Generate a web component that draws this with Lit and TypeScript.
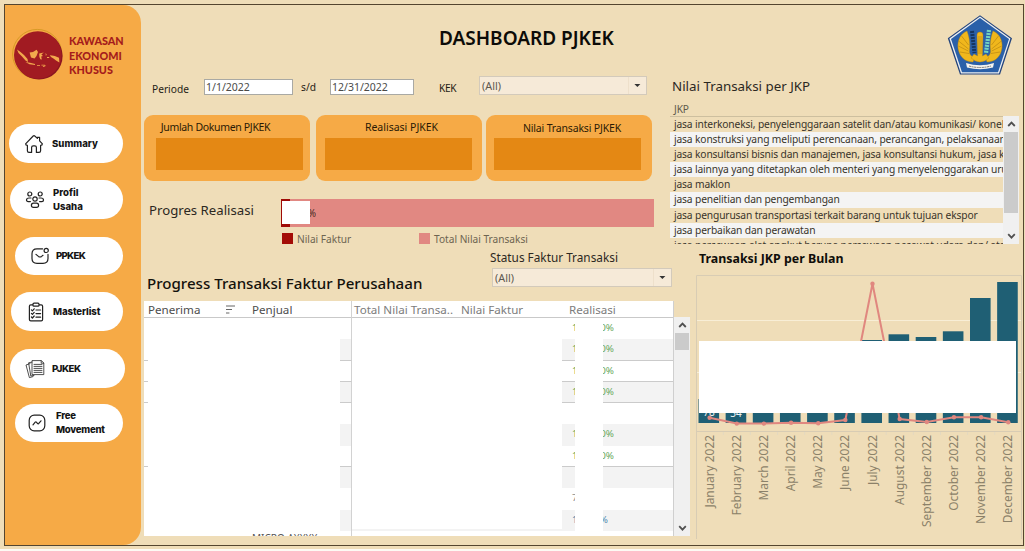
import { LitElement, html, svg, css, nothing } from "lit";
import { customElement, property } from "lit/decorators.js";

const ICONS: Record<string, unknown> = {
  home: svg`<path d="M1.6 9.8 L9.2 2 Q10 1.2 10.8 2 L13.4 4.4 V3.4 H15.6 V6.8 L18.4 9.8 Q18.4 11.4 16.6 11.4 V16.8 Q16.6 18.4 15 18.4 H12.4 V13.4 Q12.4 11.8 10.8 11.8 H9.2 Q7.6 11.8 7.6 13.4 V18.4 H5 Q3.4 18.4 3.4 16.8 V11.4 Q1.6 11.4 1.6 9.8 Z"/>`,
  people: svg`<circle cx="4.8" cy="4" r="2"/><circle cx="15.2" cy="4" r="2"/><circle cx="10" cy="9" r="2.2"/>
    <path d="M5.4 11.6H3.2a1.7 1.7 0 0 1-1.7-1.7c0-1.3 1.1-1.9 2.6-1.9h1.9M14.6 11.6h2.2a1.7 1.7 0 0 0 1.7-1.7c0-1.3-1.1-1.9-2.6-1.9h-1.9"/><rect x="6.4" y="13.2" width="7.2" height="4.2" rx="2.1"/>`,
  mail: svg`<path d="M12.6 2.8H7Q2 2.8 2 7.8V12.6Q2 17.4 7 17.4H13Q18 17.4 18 12.6V8.4"/><path d="M6 8.4 L8.4 10.4 Q10 11.6 11.6 10.4 L13 9.3"/><circle cx="16.2" cy="4.4" r="2.1"/>`,
  clipboard: svg`<rect x="3.4" y="2.8" width="13.2" height="16" rx="1.4"/><rect x="7" y="1.2" width="6" height="3" rx="1" fill="#fff"/>
    <path d="M5.4 7.8l1 1 1.8-2M10 8h4.6M5.4 11.4l1 1 1.8-2M10 11.6h4.6M5.4 15l1 1 1.8-2M10 15.2h4.6"/>`,
  papers: svg`<g stroke-width="0.8"><path d="M5 4.6 L1 6 L4.4 18.6 L8 17.6"/><path d="M7.4 3 L3.6 3.8 L5.8 17 L9 16.4"/><path d="M7.4 1.6H16.4L18.8 4V15.6H7.4Z" fill="#fff"/><path d="M9 5.4h8M9 7.4h8M9 9.4h8M9 11.4h8M9 13.4h8M16.2 1.8V4.2H18.6"/></g>`,
  trend: svg`<rect x="2.2" y="2.2" width="15.6" height="15.6" rx="5"/><path d="M6 11.8 L8.2 9.2 Q8.8 8.6 9.4 9.2 L10.6 10.6 Q11.2 11.2 11.8 10.4 L14 7.8"/>`,
};

@customElement("nav-pill")
class NavPill extends LitElement {
  @property() icon = "";
  @property() label = "";

  static styles = css`
    :host {
      display: flex;
      align-items: center;
      box-sizing: border-box;
      border-radius: 20px;
      background: #fff;
      color: #151515;
      font: 800 9.6px/13.6px Inter, sans-serif;
      white-space: pre-line;
    }
    .glyph {
      flex: none;
      width: 20px;
      height: 20px;
      margin-right: var(--gap, 8px);
      fill: none;
      stroke: #222;
      stroke-width: 1.2;
      stroke-linejoin: round;
      stroke-linecap: round;
    }
    .label { letter-spacing: var(--track, 0); }
  `;

  render() {
    return html`<svg class="glyph" viewBox="0 0 20 20">${ICONS[this.icon]}</svg><span class="label">${this.label}</span>`;
  }
}

@customElement("select-box")
class SelectBox extends LitElement {
  @property() value = "";

  static styles = css`
    :host {
      display: flex;
      box-sizing: border-box;
      height: 19px;
      border: 1px solid #d3cabb;
      background: #f6ead8;
      color: #5d5850;
      font: 10.8px/18px "Noto Sans", sans-serif;
    }
    .value { flex: 1; padding-left: 2px; }
    .arrow { width: 17px; height: 17px; border-left: 1px solid #eee0cb; }
  `;

  render() {
    return html`<span class="value">${this.value}</span>
      <svg class="arrow" viewBox="0 0 17 17"><path d="M5.4 7h6L8.4 10z" fill="#333" /></svg>`;
  }
}

@customElement("scroll-bar")
class ScrollBar extends LitElement {
  @property({ type: Number }) thumb = 20;

  static styles = css`
    :host {
      display: flex;
      flex-direction: column;
      align-items: center;
      background: #f0f0f0;
    }
    .arrow { width: 15px; height: 16px; fill: none; stroke: #505050; stroke-width: 1.8; }
    .thumb { width: 14px; background: #cbcbcb; }
    .down { margin-top: auto; }
  `;

  render() {
    return html`<svg class="arrow" viewBox="0 0 15 16"><path d="M4.2 10 7.5 6.6l3.3 3.4" /></svg>
      <div class="thumb" style="height:${this.thumb}px"></div>
      <svg class="arrow down" viewBox="0 0 15 16"><path d="M4.2 6.2 7.5 9.6l3.3-3.4" /></svg>`;
  }
}

const MONTHS = ["January", "February", "March", "April", "May", "June", "July", "August", "September", "October", "November", "December"];
const BAR_TOPS = [124, 138, 138, 138, 138, 138, 65, 59.3, 62, 56.3, 23, 7];
const LINE_Y = [142.7, 148.6, 148.6, 147.7, 148.2, 145, 8.7, 144, 147, 142.3, 142.3, 147.3];

@customElement("month-chart")
class MonthChart extends LitElement {
  static styles = css`
    :host { display: block; }
    .chart { display: block; }
    .month { font: 11.9px "Noto Sans", sans-serif; fill: #8b8169; text-anchor: end; }
    .count { font: 10px "Noto Sans", sans-serif; fill: #eef4f5; text-anchor: middle; }
  `;

  render() {
    const x = (i: number) => 13.6 + i * 27.15;
    const points = LINE_Y.map((y, i) => `${x(i)},${y}`).join(" ");
    return html`<svg class="chart" width="327" height="264" viewBox="0 0 327 264">
      <path d="M0 45.5H325M0 97.5H325" stroke="#f8eed6" />
      <path d="M0.5 264V0.5H325.5V264" fill="none" stroke="#d8ccb4" />
      <path d="M1 156.5H325" stroke="#d8ccb4" />
      ${MONTHS.map((_, i) => (i ? svg`<path d="M${x(i) - 13.5} 157v3" stroke="#e4d9c0" />` : nothing))}
      ${BAR_TOPS.map((t, i) => svg`<rect x=${x(i) - 11.1} y=${t} width="20.6" height=${148 - t} fill="#1f5f74" />`)}
      <text class="count" x="13" y="141">78</text>
      <text class="count" x="40" y="142">34</text>
      <polyline points=${points} fill="none" stroke="#e0877f" stroke-width="2" />
      ${LINE_Y.map((y, i) => svg`<circle cx=${x(i)} cy=${y} r="2.2" fill="#e0877f" />`)}
      <rect x="3" y="66" width="317" height="72" fill="#fff" />
      ${MONTHS.map((m, i) => svg`<text class="month" transform="translate(${x(i) + 4} 160) rotate(-90)">${m} 2022</text>`)}
    </svg>`;
  }
}

const SERVICES = [
  "jasa interkoneksi, penyelenggaraan satelit dan/atau komunikasi/ konektivitas",
  "jasa konstruksi yang meliputi perencanaan, perancangan, pelaksanaan",
  "jasa konsultansi bisnis dan manajemen, jasa konsultansi hukum, jasa konsultansi",
  "jasa lainnya yang ditetapkan oleh menteri yang menyelenggarakan urusan",
  "jasa maklon",
  "jasa penelitian dan pengembangan",
  "jasa pengurusan transportasi terkait barang untuk tujuan ekspor",
  "jasa perbaikan dan perawatan",
  "jasa persewaan alat angkut berupa persewaan pesawat udara dan/ atau",
];

interface Row { lead: string; tail: string; line?: boolean; tone?: string }
const ROWS: Row[] = [
  { lead: "1", tail: "0%" },
  { lead: "1", tail: "0%", line: true },
  { lead: "1", tail: "0%", line: true },
  { lead: "1", tail: "0%", line: true },
  { lead: "", tail: "" },
  { lead: "1", tail: "0%" },
  { lead: "1", tail: "0%", line: true },
  { lead: "", tail: "" },
  { lead: "7", tail: "", tone: "grey" },
  { lead: "1", tail: "%", tone: "blue" },
];

@customElement("app-root")
class AppRoot extends LitElement {
  static styles = css`
    :host {
      display: block;
      width: 1025px;
      height: 551px;
      overflow: hidden;
      background: #fdfaf4;
      font-family: "Noto Sans", sans-serif;
      color: #2c281f;
      white-space: nowrap;
    }
    .page { box-sizing: border-box; height: 549px; padding: 4px 1px 3px 4px; background: #efddb8; }
    .frame {
      box-sizing: border-box;
      display: grid;
      grid-template-columns: 136px 552px 1fr;
      height: 542px;
      border: 1px solid #54452f;
    }

    .side { display: flex; flex-direction: column; height: 540px; border-radius: 0 18px 18px 0; background: #f6aa46; }
    .brand { display: flex; height: 119px; }
    .seal { width: 54px; height: 54px; margin: 23px 4px 0 6px; }
    .brand-name { padding-top: 29px; font: 900 10.8px/14.7px Lato, sans-serif; color: #a51c1c; white-space: pre-line; }
    .pill { height: 39px; width: 114px; margin: 0 0 17px 4px; padding-left: 15px; }
    .pill.profil { margin-left: 5px; width: 113px; margin-bottom: 18px; --gap: 8px; }
    .pill.ppkek { margin-left: 10px; width: 108px; height: 38px; --gap: 6px; --track: -0.7px; }
    .pill.master { margin-left: 6px; width: 112px; margin-bottom: 18px; --gap: 7px; --track: -0.1px; }
    .pill.pjkek { margin-left: 5px; width: 115px; margin-bottom: 16px; --gap: 7px; --track: -0.5px; }
    .pill.free { margin-left: 10px; width: 108px; height: 38px; padding-left: 12px; --gap: 9px; --track: -0.25px; }

    .main { padding-left: 3px; }
    .title { height: 71px; margin: 0; padding-left: 295px; font-size: 19px; line-height: 66px; font-weight: 600; color: #0c0b08; }
    .filters { display: flex; height: 39px; font-size: 10.2px; line-height: 19px; color: #1f1c15; }
    .periode { width: 60px; padding: 4px 0 0 8px; box-sizing: border-box; }
    .date { box-sizing: border-box; width: 89px; height: 16px; margin-top: 3px; padding-left: 1px; border: 1px solid #a9a9a4; background: #fff; font-size: 10.5px; line-height: 14px; color: #4a4a48; }
    .sd { width: 37px; padding: 2px 0 0 8px; box-sizing: border-box; }
    .date.end { width: 84px; }
    .kek { width: 65px; padding: 3px 0 0 25px; box-sizing: border-box; letter-spacing: -0.3px; }
    .kek-select { width: 168px; }

    .cards { display: flex; height: 66px; }
    .card { box-sizing: border-box; width: 166px; margin-right: 6px; padding: 3px 7px 0 12px; border-radius: 9px; background: #f6aa46; font-size: 10.5px; line-height: 18px; text-align: center; color: #2b1a05; }
    .card.second { margin-right: 4px; padding: 3px 10px 0 9px; }
    .card.third { padding: 4px 11px 0 8px; }
    .fill { height: 32px; margin-top: 2px; background: #e48814; }
    .card.third .fill { margin-top: 1px; }
    .first .card-name { padding-right: 28px; letter-spacing: -0.33px; }
    .second .card-name { padding-left: 6px; }
    .third .card-name { padding-left: 9px; letter-spacing: -0.17px; }

    .progress { display: flex; height: 28px; margin-top: 18px; }
    .progress-name { width: 137px; box-sizing: border-box; padding-left: 5px; font-size: 13.2px; line-height: 23px; }
    .track { display: flex; width: 373px; background: linear-gradient(90deg, #9f0a06 0 9px, #e18882 9px); }
    .masked { width: 28px; height: 23px; margin: 2px 0 0 1px; background: #fff; }
    .percent { width: 6px; overflow: hidden; direction: rtl; font-size: 10px; line-height: 28px; color: #4b2a22; }
    .legend { display: flex; height: 19px; padding: 4px 0 0 138px; font-size: 10.15px; line-height: 16px; color: #6d6450; }
    .key { width: 11px; height: 11px; margin: 2px 4px 0 0; background: #a30c06; }
    .key.total { background: #e18882; }
    .legend-name { width: 122px; }

    .table-head { display: flex; justify-content: space-between; height: 51px; }
    .table-title { margin: 0; padding: 20px 0 0 3px; font-size: 15.1px; line-height: 26px; font-weight: 500; color: #14120c; }
    .status { width: 203px; font-size: 11.8px; }
    .status-name { height: 18px; line-height: 14px; }
    .status-select { width: 180px; margin-left: 2px; }

    .table { display: flex; width: 547px; height: 235px; }
    .grid { width: 529px; height: 235px; overflow: hidden; background: #fff; border-right: 1px solid #cfcfcf; }
    .columns { display: grid; grid-template-columns: 108px 99px 109px 108px 1fr; height: 16px; border-bottom: 1px solid #c9c9c9; font-size: 11.6px; line-height: 18px; color: #4d4d4d; }
    .column.sorted { display: flex; justify-content: space-between; padding: 0 17px 0 4px; }
    .column.soft { padding-left: 1px; color: #7c7c7c; }
    .column.soft.split { border-left: 1px solid #d2d2d2; padding-left: 2px; letter-spacing: 0; }
    .sort { width: 9px; height: 9px; margin-top: 4px; stroke: #666; stroke-width: 1.2; }
    .row { display: grid; grid-template-columns: 4px 192px 12px 210px 13px 28px 1fr; box-sizing: border-box; height: 21.3px; font-size: 9.8px; line-height: 20px; color: #69a95d; }
    .cell { box-sizing: border-box; height: 21.3px; overflow: hidden; background: #fff; }
    .row.even .tinted { background: #f3f3f3; }
    .row.line .ruled { border-bottom: 1px solid #cbcbcb; }
    .row .divide { border-right: 1px solid #d2d2d2; }
    .row.blue .wide { border-bottom: 2px solid #f3f3f3; }
    .cell.lead { padding-left: 10px; }
    .cell.tail { display: flex; }
    .clip { display: flex; justify-content: flex-end; width: 11px; overflow: hidden; }
    .row.blue .clip { width: 5px; }
    .row.grey { color: #8b8b8b; }
    .row.blue { color: #4f86ad; }
    .next { display: grid; grid-template-columns: 108px 100px 1fr; height: 5px; font-size: 10px; line-height: 14px; color: #555; }
    .next-name { height: 5px; overflow: hidden; border-right: 1px solid #d2d2d2; }
    .table-scroll { width: 16px; margin: 16px 0 0 0; }

    .right { position: relative; }
    .emblem { position: absolute; left: 253px; top: 9px; width: 68px; height: 62px; }
    .jkp-title { margin: 0 0 0 -21px; height: 24px; padding-top: 70px; font-size: 13.35px; line-height: 23px; font-weight: 400; }
    .jkp { display: flex; height: 146px; margin: 0 0 0 -23px; font-size: 10.25px; letter-spacing: -0.145px; }
    .jkp-list { width: 333px; height: 145px; overflow: hidden; }
    .jkp-head { box-sizing: border-box; height: 17.5px; padding-left: 4px; border-bottom: 1px solid #cdbf9f; line-height: 20px; font-size: 10.2px; color: #60594a; }
    .service { height: 15.2px; padding-left: 4px; line-height: 15px; color: #39342a; }
    .service.alt { background: #f4f4f4; }
    .jkp-scroll { width: 16px; margin: 17px 0 1px 0; }
    .chart-title { height: 30px; margin: 0; padding-left: 6px; font-size: 12.4px; line-height: 28px; font-weight: 700; color: #0f0e0a; }
    .month-chart { margin-left: 3px; }
  `;

  render() {
    return html`<div class="page"><div class="frame">
      <nav class="side">
        <div class="brand">
          <svg class="seal" viewBox="0 0 54 54">
            <circle cx="26.2" cy="26" r="24.6" fill="none" stroke="#d79a25" />
            <circle cx="28" cy="28" r="23.6" fill="#8a1620" />
            <circle cx="26.8" cy="27" r="23.8" fill="#a11b22" />
            <g fill="#f2a94d">
              <path d="M6 21.5 L9.5 24 L13 27 L16.5 31 L17 34 L14.5 32.5 L11 28.5 L7.5 25z" />
              <path d="M14.5 34 L19 34.8 L24 36 L24 37 L18.5 36.2z" />
              <path d="M18.6 24.6 L22 24 L25.6 21.8 L27 24 L25.5 28 L23.6 30.6 L20 29.4z" />
              <path d="M28.2 25.6 L32.8 24.6 L30.4 26.4 L32 28 L30.2 28.6 L30.8 31.6 L29.4 31.2 L28.4 29z" />
              <path d="M34.5 25l1.2 1.4-.8 1.6zM36 29h2.2v.9H36z" />
              <path d="M38.8 27.2 L41 27.6 L43.8 28 L48 29.8 L48.4 34.4 L45 32.6 L42.8 30.8 L40 29z" />
              <path d="M26 37h3v.8h-3zM30.4 36.8h3.4v.8h-3.4zM31.6 38.2l3-1v.8l-2 .9z" />
            </g>
          </svg>
          <div class="brand-name">KAWASAN
EKONOMI
KHUSUS</div>
        </div>
        <nav-pill class="pill" icon="home" label="Summary"></nav-pill>
        <nav-pill class="pill profil" icon="people" label=${"Profil\nUsaha"}></nav-pill>
        <nav-pill class="pill ppkek" icon="mail" label="PPKEK"></nav-pill>
        <nav-pill class="pill master" icon="clipboard" label="Masterlist"></nav-pill>
        <nav-pill class="pill pjkek" icon="papers" label="PJKEK"></nav-pill>
        <nav-pill class="pill free" icon="trend" label=${"Free\nMovement"}></nav-pill>
      </nav>

      <main class="main">
        <h1 class="title">DASHBOARD PJKEK</h1>
        <div class="filters">
          <span class="periode">Periode</span>
          <span class="date">1/1/2022</span>
          <span class="sd">s/d</span>
          <span class="date end">12/31/2022</span>
          <span class="kek">KEK</span>
          <select-box class="kek-select" value="(All)"></select-box>
        </div>
        <div class="cards">
          <div class="card first"><div class="card-name">Jumlah Dokumen PJKEK</div><div class="fill"></div></div>
          <div class="card second"><div class="card-name">Realisasi PJKEK</div><div class="fill"></div></div>
          <div class="card third"><div class="card-name">Nilai Transaksi PJKEK</div><div class="fill"></div></div>
        </div>
        <div class="progress">
          <span class="progress-name">Progres Realisasi</span>
          <div class="track"><div class="masked"></div><span class="percent">%</span></div>
        </div>
        <div class="legend">
          <span class="key"></span><span class="legend-name">Nilai Faktur</span>
          <span class="key total"></span><span>Total Nilai Transaksi</span>
        </div>
        <div class="table-head">
          <h2 class="table-title">Progress Transaksi Faktur Perusahaan</h2>
          <div class="status">
            <div class="status-name">Status Faktur Transaksi</div>
            <select-box class="status-select" value="(All)"></select-box>
          </div>
        </div>
        <div class="table">
          <div class="grid">
            <div class="columns">
              <span class="column sorted">Penerima
                <svg class="sort" viewBox="0 0 9 9"><path d="M0 1h9M0 4.5h6M0 8h3.4" /></svg></span>
              <span class="column">Penjual</span>
              <span class="column soft split">Total Nilai Transa..</span>
              <span class="column soft">Nilai Faktur</span>
              <span class="column soft">Realisasi</span>
            </div>
            ${ROWS.map((r, i) => html`<div class="row ${i % 2 ? "even" : ""} ${r.line ? "line" : ""} ${r.tone ?? ""}">
              <span class="cell ruled"></span><span class="cell"></span>
              <span class="cell tinted ruled divide"></span><span class="cell wide"></span>
              <span class="cell tinted ruled lead">${r.lead}</span><span class="cell"></span>
              <span class="cell tinted ruled tail"><span class="clip">${r.tail}</span></span>
            </div>`)}
            <div class="next"><span></span><span class="next-name">MICRO AXXXX</span></div>
          </div>
          <scroll-bar class="table-scroll" .thumb=${17}></scroll-bar>
        </div>
      </main>

      <section class="right">
        <svg class="emblem" viewBox="0 0 68 62">
          <path d="M34 1.2 L66 24.2 L54 60.6 H14 L1.8 24.2Z" fill="#24447c" />
          <path d="M34 2.6 L64.4 24.6 L53 59.4 H15 L3.4 24.6Z" fill="#eef0f2" />
          <path d="M34 4 L63 25 L52 58.2 H16 L5 25Z" fill="#2a60a9" />
          <g fill="#f0b71c" stroke="#b9860e" stroke-width="0.4">
            <path d="M21 17 C13 20 10 30 13 38 C15 44 20 48 27 48 L29 43 C25 43 23 40 23.5 36 C24 31 24 25 21 17Z" />
            <path d="M47 17 C55 20 58 30 55 38 C53 44 48 48 41 48 L39 43 C43 43 45 40 44.5 36 C44 31 44 25 47 17Z" />
            <path d="M31 21 Q31 18 34 18 Q37 18 37 21 L36.4 42 L40 40 L43 44 Q34 52 25 44 L28 40 L31.6 42Z" />
          </g>
          <path d="M12.5 27l10 8M12.3 32l10 5M14 38l9 1.5M15.5 22l7 9M55.5 27l-10 8M55.7 32l-10 5M54 38l-9 1.5M52.5 22l-7 9M33 22v18M35 22v18" stroke="#b07f10" stroke-width="0.6" />
          <path d="M26 17 L28.5 39" stroke="#153560" stroke-width="4" stroke-dasharray="2 1" />
          <path d="M43 16 L40 39" stroke="#74d4c0" stroke-width="4.2" stroke-dasharray="2 1" />
          <path d="M20 49 Q34 53.5 48 49 L47 53.5 Q34 57 21 53.5Z" fill="#f5f3ee" />
          <path d="M23 52 Q34 55 45 52" fill="none" stroke="#6b6b6b" stroke-width="0.9" stroke-dasharray="2 .6" />
        </svg>
        <h2 class="jkp-title">Nilai Transaksi per JKP</h2>
        <div class="jkp">
          <div class="jkp-list">
            <div class="jkp-head">JKP</div>
            ${SERVICES.map((s, i) => html`<div class="service ${i % 2 ? "alt" : ""}">${s}</div>`)}
          </div>
          <scroll-bar class="jkp-scroll" .thumb=${81}></scroll-bar>
        </div>
        <h2 class="chart-title">Transaksi JKP per Bulan</h2>
        <month-chart class="month-chart"></month-chart>
      </section>
    </div></div>`;
  }
}
